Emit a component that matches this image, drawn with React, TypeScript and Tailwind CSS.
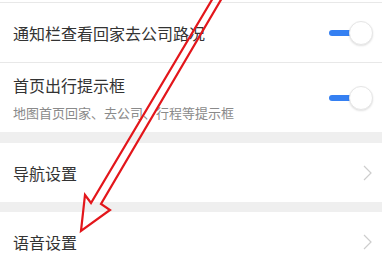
import React from "react"

const font = { fontFamily: '"Noto Sans CJK SC", "Noto Sans", sans-serif' }

// Blue "on" switch
const Toggle: React.FC = () => (
  <div className="relative w-[44px] h-[24px] shrink-0">
    <div className="absolute left-0 top-[9px] w-[26px] h-[6px] rounded-full bg-[#3580f2]" />
    <div className="absolute right-0 top-0 w-[24px] h-[24px] rounded-full bg-white border border-[#e6e6e6] shadow-[0_1px_2px_rgba(0,0,0,0.12)]" />
  </div>
)

const Chevron: React.FC = () => (
  <svg width="9" height="16" viewBox="0 0 9 16" className="shrink-0">
    <polyline points="1,1 8,8 1,15" fill="none" stroke="#cdcdcd" strokeWidth="1.2" />
  </svg>
)

// Hand-drawn red arrow over the screenshot
const RedArrow: React.FC = () => (
  <svg className="absolute inset-0 pointer-events-none" width="382" height="259" viewBox="0 0 382 259">
    <polyline
      points="213,-2 91,203 85,195 81,231 110,210 101,204 222,-2"
      fill="none"
      stroke="#e3161b"
      strokeWidth="2.2"
      strokeLinejoin="miter"
    />
  </svg>
)

export default function App() {
  return (
    <div className="relative w-[382px] h-[259px] overflow-hidden bg-white" style={font}>
      <div className="h-[2px]" />
      <div className="flex items-center justify-between h-[61px] pl-[13px] pr-[9px] border-y border-[#e8e8e8]">
        <span className="text-[16px] text-[#333] leading-[22px]">通知栏查看回家去公司路况</span>
        <Toggle />
      </div>
      <div className="flex items-center justify-between h-[69px] pl-[13px] pr-[9px]">
        <div className="flex flex-col gap-[8px]">
          <span className="text-[16px] text-[#333] leading-[22px]">首页出行提示框</span>
          <span className="text-[13px] text-[#8a8a8a] leading-[18px]">地图首页回家、去公司、行程等提示框</span>
        </div>
        <Toggle />
      </div>
      <div className="h-[11px] bg-[#efefef]" />
      <div className="flex items-center justify-between h-[59px] pl-[13px] pr-[10px]">
        <span className="text-[16px] text-[#333] leading-[22px]">导航设置</span>
        <Chevron />
      </div>
      <div className="h-[10px] bg-[#efefef]" />
      <div className="flex items-center justify-between h-[60px] pl-[13px] pr-[10px]">
        <span className="text-[16px] text-[#333] leading-[22px]">语音设置</span>
        <Chevron />
      </div>
      <RedArrow />
    </div>
  )
}
